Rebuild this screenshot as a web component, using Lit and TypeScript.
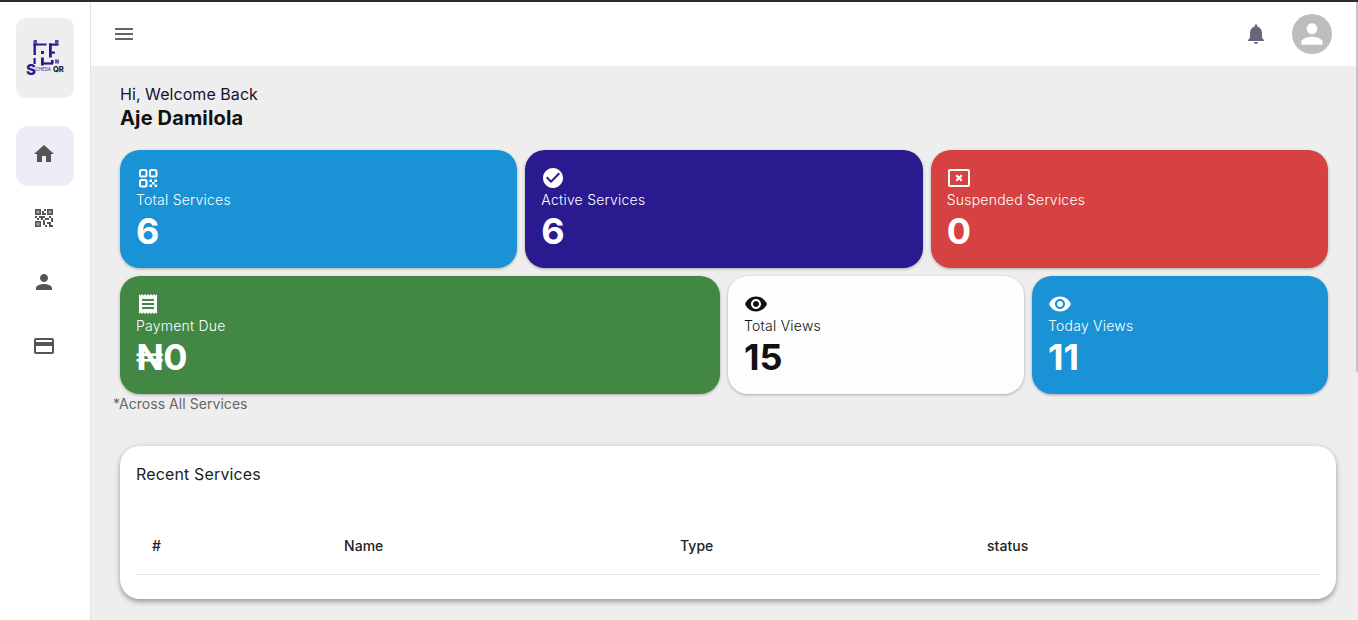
import { LitElement, html, css, svg } from "lit";
import { customElement } from "lit/decorators.js";

const P = {
  menu: "M3 18h18v-2H3v2zm0-5h18v-2H3v2zm0-7v2h18V6H3z",
  home: "M10 20v-6h4v6h5v-8h3L12 3 2 12h3v8z",
  person: "M12 12c2.21 0 4-1.79 4-4s-1.79-4-4-4-4 1.79-4 4 1.79 4 4 4zm0 2c-2.67 0-8 1.34-8 4v2h16v-2c0-2.66-5.33-4-8-4z",
  card: "M20 4H4c-1.11 0-1.99.89-1.99 2L2 18c0 1.11.89 2 2 2h16c1.11 0 2-.89 2-2V6c0-1.11-.89-2-2-2zm0 14H4v-6h16v6zm0-10H4V6h16v2z",
  bell: "M12 22c1.1 0 2-.9 2-2h-4c0 1.1.9 2 2 2zm6-6v-5c0-3.07-1.63-5.64-4.5-6.32V4c0-.83-.67-1.5-1.5-1.5s-1.5.67-1.5 1.5v.68C7.64 5.36 6 7.92 6 11v5l-2 2v1h16v-1l-2-2z",
  check: "M12 2C6.48 2 2 6.48 2 12s4.48 10 10 10 10-4.48 10-10S17.52 2 12 2zm-2 15l-5-5 1.41-1.41L10 14.17l7.59-7.59L19 8l-9 9z",
  eye: "M12 4.5C7 4.5 2.73 7.61 1 12c1.73 4.39 6 7.5 11 7.5s9.27-3.11 11-7.5c-1.73-4.39-6-7.5-11-7.5zM12 17c-2.76 0-5-2.24-5-5s2.24-5 5-5 5 2.24 5 5-2.24 5-5 5zm0-8c-1.66 0-3 1.34-3 3s1.34 3 3 3 3-1.34 3-3-1.34-3-3-3z",
  receipt: "M18 17H6v-2h12v2zm0-4H6v-2h12v2zm0-4H6V7h12v2zM3 22l1.5-1.5L6 22l1.5-1.5L9 22l1.5-1.5L12 22l1.5-1.5L15 22l1.5-1.5L18 22l1.5-1.5L21 22V2l-1.5 1.5L18 2l-1.5 1.5L15 2l-1.5 1.5L12 2l-1.5 1.5L9 2 7.5 3.5 6 2 4.5 3.5 3 2v20z",
  qr2: "M15 21h-2v-2h2v2zM13 14h-2v5h2v-5zM21 12h-2v4h2v-4zM19 10h-2v2h2v-2zM7 12H5v2h2v-2zM5 10H3v2h2v-2zM12 5h2V3h-2v2zM4.5 4.5v3h3v-3h-3zM9 9H3V3h6v6zM4.5 16.5v3h3v-3h-3zM9 21H3v-6h6v6zM16.5 4.5v3h3v-3h-3zM21 9h-6V3h6v6zM19 19v-3h-4v2h2v3h4v-2h-2zM17 12h-4v2h4v-2zM13 10H7v2h2v2h2v-2h2v-2zM14 9V7h-2V5h-2v4h4z",
};

const icon = (d: string) => html`<svg class="ic" viewBox="0 0 24 24" fill="currentColor"><path d="${d}"></path></svg>`;

const qrNav = html`<svg class="ic" viewBox="0 0 24 24" fill="currentColor">
  <rect x="4" y="4" width="4" height="4" opacity=".55"></rect>
  <rect x="4" y="16" width="4" height="4" opacity=".55"></rect>
  <rect x="16" y="4" width="4" height="4" opacity=".55"></rect>
  <path d="${P.qr2}"></path></svg>`;

const qrOutline = html`<svg class="ic" viewBox="0 0 24 24" fill="none" stroke="currentColor" stroke-width="2">
  <rect x="4" y="4" width="6.5" height="6.5" rx="1.5"></rect>
  <rect x="14" y="4" width="6.5" height="6.5" rx="1.5"></rect>
  <rect x="4" y="14" width="6.5" height="6.5" rx="1.5"></rect>
  <g fill="currentColor" stroke="none">
    <rect x="13.5" y="13.5" width="2.5" height="2.5"></rect><rect x="18.5" y="13.5" width="2.5" height="2.5"></rect>
    <rect x="16" y="16" width="2.5" height="2.5"></rect>
    <rect x="13.5" y="18.5" width="2.5" height="2.5"></rect><rect x="18.5" y="18.5" width="2.5" height="2.5"></rect>
  </g></svg>`;

const xBox = html`<svg class="ic" viewBox="0 0 24 24" fill="none" stroke="currentColor">
  <rect x="2" y="4" width="20" height="16" rx="1" stroke-width="2"></rect>
  <path d="M9.2 9.2l5.6 5.6M14.8 9.2l-5.6 5.6" stroke-width="2.2"></path></svg>`;

const logo = svg`<svg class="logo" viewBox="0 0 58 80" width="58" height="80" aria-label="Scheda QR">
  <g fill="#2a1a8f">
    <rect x="17.5" y="22" width="3.5" height="3.5" opacity=".8"></rect>
    <rect x="39" y="22" width="3.5" height="3.5" opacity=".8"></rect>
    <rect x="17.5" y="25.5" width="13" height="2"></rect>
    <rect x="17.5" y="25.5" width="2.4" height="11.5"></rect>
    <rect x="25" y="33" width="3" height="3"></rect>
    <rect x="33" y="25.5" width="2.8" height="14"></rect>
    <rect x="33" y="25.5" width="9.5" height="2.2"></rect>
    <rect x="33" y="33.5" width="6" height="2.2"></rect>
    <rect x="17.5" y="40" width="2.2" height="6"></rect>
    <rect x="25" y="39.5" width="2.8" height="8"></rect>
    <rect x="25" y="44.4" width="12" height="2.2"></rect>
    <rect x="35" y="42" width="2.6" height="3.5"></rect>
    <rect x="39" y="41.5" width="4" height="4" opacity=".7"></rect>
    <text x="10" y="56.5" font-family="Inter, sans-serif" font-weight="800" font-size="15">S</text>
    <text x="19.5" y="53" font-family="Inter, sans-serif" font-weight="500" font-size="4.4" opacity=".85">CHEDA</text>
  </g>
  <text x="37" y="53.5" fill="#222" font-family="Inter, sans-serif" font-weight="800" font-size="7.5">QR</text>
</svg>`;

@customElement("app-root")
export class AppRoot extends LitElement {
  static styles = css`
    :host {
      display: block;
      height: 620px;
      overflow: hidden;
      position: relative;
      font-family: Inter, "Noto Sans", sans-serif;
      color: #111;
      border-top: 2px solid #2b2b2b;
      box-sizing: border-box;
      background: #eee;
    }
    .shell { display: flex; height: 618px; }
    .side {
      width: 90px;
      flex: none;
      background: #fff;
      border-right: 1px solid #e3e3e3;
      display: flex;
      flex-direction: column;
      align-items: center;
      padding-top: 16px;
      gap: 4px;
    }
    .logo-box {
      width: 58px;
      height: 80px;
      border-radius: 10px;
      background: #eee;
      margin-bottom: 24px;
    }
    .logo { display: block; }
    .nav {
      width: 58px;
      height: 60px;
      box-sizing: border-box;
      padding: 0 2px 4px 0;
      border-radius: 12px;
      display: flex;
      align-items: center;
      justify-content: center;
      color: #555;
    }
    .nav.active { background: #edecf7; }
    .ic { width: 24px; height: 24px; display: block; flex: none; }
    .main { flex: 1; min-width: 0; display: flex; flex-direction: column; }
    .top {
      height: 64px;
      flex: none;
      background: #fff;
      display: flex;
      align-items: center;
      padding: 0 26px 0 21px;
    }
    .top .menu { color: #666; }
    .top .bell { color: #66667a; margin-left: auto; margin-right: 24px; }
    .avatar {
      width: 40px;
      height: 40px;
      border-radius: 50%;
      background: #bdbdbd;
      color: #fff;
      display: flex;
      align-items: center;
      justify-content: center;
    }
    .avatar .ic { width: 32px; height: 32px; }
    .content { padding: 18px 22px 0 29px; }
    .hi { font-size: 16px; line-height: 20px; color: #14142b; letter-spacing: 0.06px; }
    .name { font-size: 20px; line-height: 28px; font-weight: 700; margin-bottom: 18px; letter-spacing: 0.15px; }
    .grid {
      display: grid;
      grid-template-columns: repeat(12, 1fr);
      gap: 8px;
      margin-right: 8px;
    }
    .stat {
      height: 118px;
      box-sizing: border-box;
      padding: 16px;
      border-radius: 20px;
      color: #fff;
      box-shadow: 0 1px 3px rgba(0, 0, 0, 0.3);
    }
    .s4 { grid-column: span 4; }
    .s6 { grid-column: span 6; }
    .s3 { grid-column: span 3; }
    .blue { background: #1a92d6; }
    .indigo { background: #2a1a8f; }
    .red { background: #d64242; }
    .green { background: #438745; }
    .white { background: #fdfdfd; color: #111; }
    .label { font-size: 14px; line-height: 20px; letter-spacing: 0.23px; font-weight: 300; }
    .value { font-size: 36px; line-height: 42px; font-weight: 700; }
    .note {
      font-size: 14px;
      line-height: 20px;
      color: #666;
      margin: 0 0 32px -7px;
      letter-spacing: 0.05px;
    }
    .recent {
      height: 153px;
      box-sizing: border-box;
      background: #fff;
      border-radius: 20px;
      padding: 16px;
      box-shadow: 0 3px 5px rgba(0, 0, 0, 0.3), 0 0 8px rgba(0, 0, 0, 0.08);
    }
    .recent h2 { margin: 0; font-size: 16px; line-height: 24px; font-weight: 400; color: #222; letter-spacing: 0.15px; }
    .thead {
      margin-top: 32px;
      height: 57px;
      box-sizing: border-box;
      padding: 0 16px 2px;
      display: grid;
      grid-template-columns: 192px 336px 307px 1fr;
      align-items: center;
      border-bottom: 1px solid #e2e2e2;
      font-size: 14px;
      font-weight: 500;
      color: #222;
      letter-spacing: 0.05px;
    }
    .thumb {
      position: absolute;
      top: -2px;
      right: 0;
      width: 2px;
      height: 372px;
      background: #c4c4c4;
    }
  `;

  private stat(span: string, tone: string, ic: unknown, label: string, value: string) {
    return html`<div class="stat ${span} ${tone}">
      ${ic}
      <div class="label">${label}</div>
      <div class="value">${value}</div>
    </div>`;
  }

  render() {
    return html`
      <div class="shell">
        <aside class="side">
          <div class="logo-box">${logo}</div>
          <div class="nav active">${icon(P.home)}</div>
          <div class="nav">${qrNav}</div>
          <div class="nav">${icon(P.person)}</div>
          <div class="nav">${icon(P.card)}</div>
        </aside>
        <div class="main">
          <header class="top">
            <span class="menu">${icon(P.menu)}</span>
            <span class="bell">${icon(P.bell)}</span>
            <span class="avatar">${icon(P.person)}</span>
          </header>
          <div class="content">
            <div class="hi">Hi, Welcome Back</div>
            <div class="name">Aje Damilola</div>
            <div class="grid">
              ${this.stat("s4", "blue", qrOutline, "Total Services", "6")}
              ${this.stat("s4", "indigo", icon(P.check), "Active Services", "6")}
              ${this.stat("s4", "red", xBox, "Suspended Services", "0")}
              ${this.stat("s6", "green", icon(P.receipt), "Payment Due", "₦0")}
              ${this.stat("s3", "white", icon(P.eye), "Total Views", "15")}
              ${this.stat("s3", "blue", icon(P.eye), "Today Views", "11")}
            </div>
            <div class="note">*Across All Services</div>
            <section class="recent">
              <h2>Recent Services</h2>
              <div class="thead"><span>#</span><span>Name</span><span>Type</span><span>status</span></div>
            </section>
          </div>
        </div>
      </div>
      <div class="thumb"></div>
    `;
  }
}
